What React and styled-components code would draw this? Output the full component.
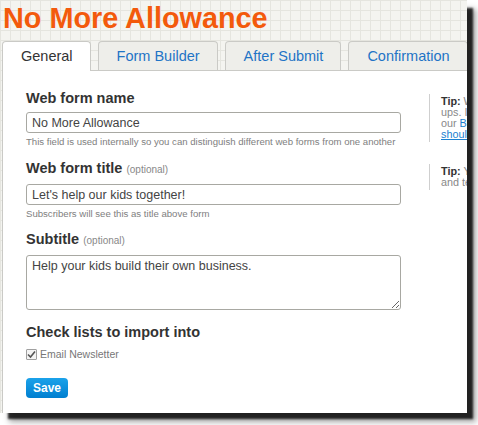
import styled, { createGlobalStyle } from "styled-components";

const Global = createGlobalStyle`
html, body {
    margin: 0;
    padding: 0;
    background: #ffffff;
}
body { min-height: 100vh; }
* { box-sizing: border-box; }
`

const Window = styled.div`
width: 467px;
height: 413px;
overflow: hidden;
display: flex;
flex-direction: column;
font-family: "Liberation Sans", Arial, sans-serif;
background-color: #f4f4f0;
background-image:
    linear-gradient(#e5e5df 1px, transparent 1px),
    linear-gradient(90deg, #e5e5df 1px, transparent 1px);
background-size: 10px 10px;
box-shadow: 7px 7px 2px -1px rgba(0,0,0,0.8), 9px 9px 6px rgba(0,0,0,0.35);
`

const Title = styled.h1`
margin: 0;
padding: 1px 0 0 3px;
font-size: 28.8px;
line-height: 34px;
font-weight: bold;
color: #f35a0c;
white-space: nowrap;
`

const Tabs = styled.div`
display: flex;
gap: 7px;
margin-top: 6px;
padding-left: 2px;
align-items: flex-end;
position: relative;
z-index: 1;
`

const Tab = styled.div`
flex-shrink: 0;
height: ${p => p.$active ? "30px" : "29px"};
margin-bottom: ${p => p.$active ? "-1px" : "0"};
padding: 0 17px 1px 18px;
display: flex;
align-items: center;
font-size: 14.5px;
white-space: nowrap;
color: ${p => p.$active ? "#333333" : "#1f74c6"};
background: ${p => p.$active ? "#ffffff" : "#eeeeea"};
border: 1px solid #cacac6;
border-bottom: none;
border-radius: 4px 4px 0 0;
`

const Panel = styled.div`
flex: 1;
margin-left: 2px;
background: #ffffff;
border-top: 1px solid #cacac6;
border-left: 1px solid #cacac6;
display: flex;
padding: 18px 0 0 23px;
`

const FormCol = styled.div`
width: 375px;
flex-shrink: 0;
display: flex;
flex-direction: column;
`

const Label = styled.div`
font-size: 14.5px;
line-height: 18px;
font-weight: bold;
color: #333333;
margin-top: ${p => p.$top || 0}px;
white-space: nowrap;
`

const Optional = styled.span`
font-size: 10px;
font-weight: normal;
color: #888888;
`

const Input = styled.input`
display: block;
width: 100%;
height: 21px;
margin-top: 5px;
padding: 0 5px;
border: 1px solid #a8a8a2;
border-radius: 3px;
font-family: "Liberation Sans", Arial, sans-serif;
font-size: 12.5px;
color: #444444;
outline: none;
`

const TextArea = styled.textarea`
display: block;
width: 100%;
height: 55px;
margin-top: 5px;
padding: 3px 5px;
border: 1px solid #a8a8a2;
border-radius: 3px;
font-family: "Liberation Sans", Arial, sans-serif;
font-size: 12.5px;
line-height: 15px;
color: #444444;
outline: none;
`

const Help = styled.div`
margin-top: 3px;
font-size: 9.6px;
line-height: 12px;
color: #808080;
white-space: nowrap;
`

const CheckRow = styled.label`
display: flex;
align-items: center;
gap: 3px;
margin-top: 6px;
height: 14px;
font-size: 10.5px;
color: #777777;
`

const CheckBox = styled.span`
width: 11px;
height: 11px;
border: 1px solid #a0a0a0;
border-radius: 1px;
background: #f4f4f4;
display: flex;
align-items: center;
justify-content: center;
`

const SaveButton = styled.button`
align-self: flex-start;
margin-top: 17px;
height: 20px;
padding: 0 7px;
border: none;
border-radius: 4px;
background: linear-gradient(#1ba2ea, #007fd0);
color: #ffffff;
font-family: "Liberation Sans", Arial, sans-serif;
font-size: 12px;
font-weight: bold;
`

const TipCol = styled.div`
margin-left: 28px;
display: flex;
flex-direction: column;
`

const Tip = styled.div`
margin-top: ${p => p.$top}px;
border-left: 1px solid #cfcfcf;
padding: 2px 0 2px 11px;
font-size: 10.8px;
line-height: 11px;
color: #888888;
white-space: nowrap;
b { color: #333333; }
`

const TipLink = styled.span`
color: #1a7fd0;
text-decoration: ${p => p.$under ? "underline" : "none"};
`

export default function App(){
    return (
        <>
            <Global />
            <Window>
                <Title>No More Allowance</Title>
                <Tabs>
                    <Tab $active>General</Tab>
                    <Tab>Form Builder</Tab>
                    <Tab>After Submit</Tab>
                    <Tab>Confirmation</Tab>
                </Tabs>
                <Panel>
                    <FormCol>
                        <Label>Web form name</Label>
                        <Input defaultValue="No More Allowance" />
                        <Help>This field is used internally so you can distinguish different web forms from one another</Help>

                        <Label $top={11}>Web form title <Optional>(optional)</Optional></Label>
                        <Input defaultValue="Let's help our kids together!" />
                        <Help>Subscribers will see this as title above form</Help>

                        <Label $top={10}>Subtitle <Optional>(optional)</Optional></Label>
                        <TextArea defaultValue="Help your kids build their own business." />

                        <Label $top={13}>Check lists to import into</Label>
                        <CheckRow>
                            <CheckBox>
                                <svg width="9" height="9" viewBox="0 0 9 9">
                                    <path d="M1 4.5 L3.5 7 L8 1.5" fill="none" stroke="#555" strokeWidth="1.6" />
                                </svg>
                            </CheckBox>
                            Email Newsletter
                        </CheckRow>
                        <SaveButton>Save</SaveButton>
                    </FormCol>
                    <TipCol>
                        <Tip $top={5}>
                            <b>Tip:</b> We recommend using a separate web form for different sign<br />
                            ups. It helps you track where your subscribers come from. Read<br />
                            our <TipLink>Blog post about why you</TipLink><br />
                            <TipLink $under>should use multiple forms</TipLink>
                        </Tip>
                        <Tip $top={22}>
                            <b>Tip:</b> You can customize the form fields, layout<br />
                            and texts in the Form Builder tab
                        </Tip>
                    </TipCol>
                </Panel>
            </Window>
        </>
    )
}
